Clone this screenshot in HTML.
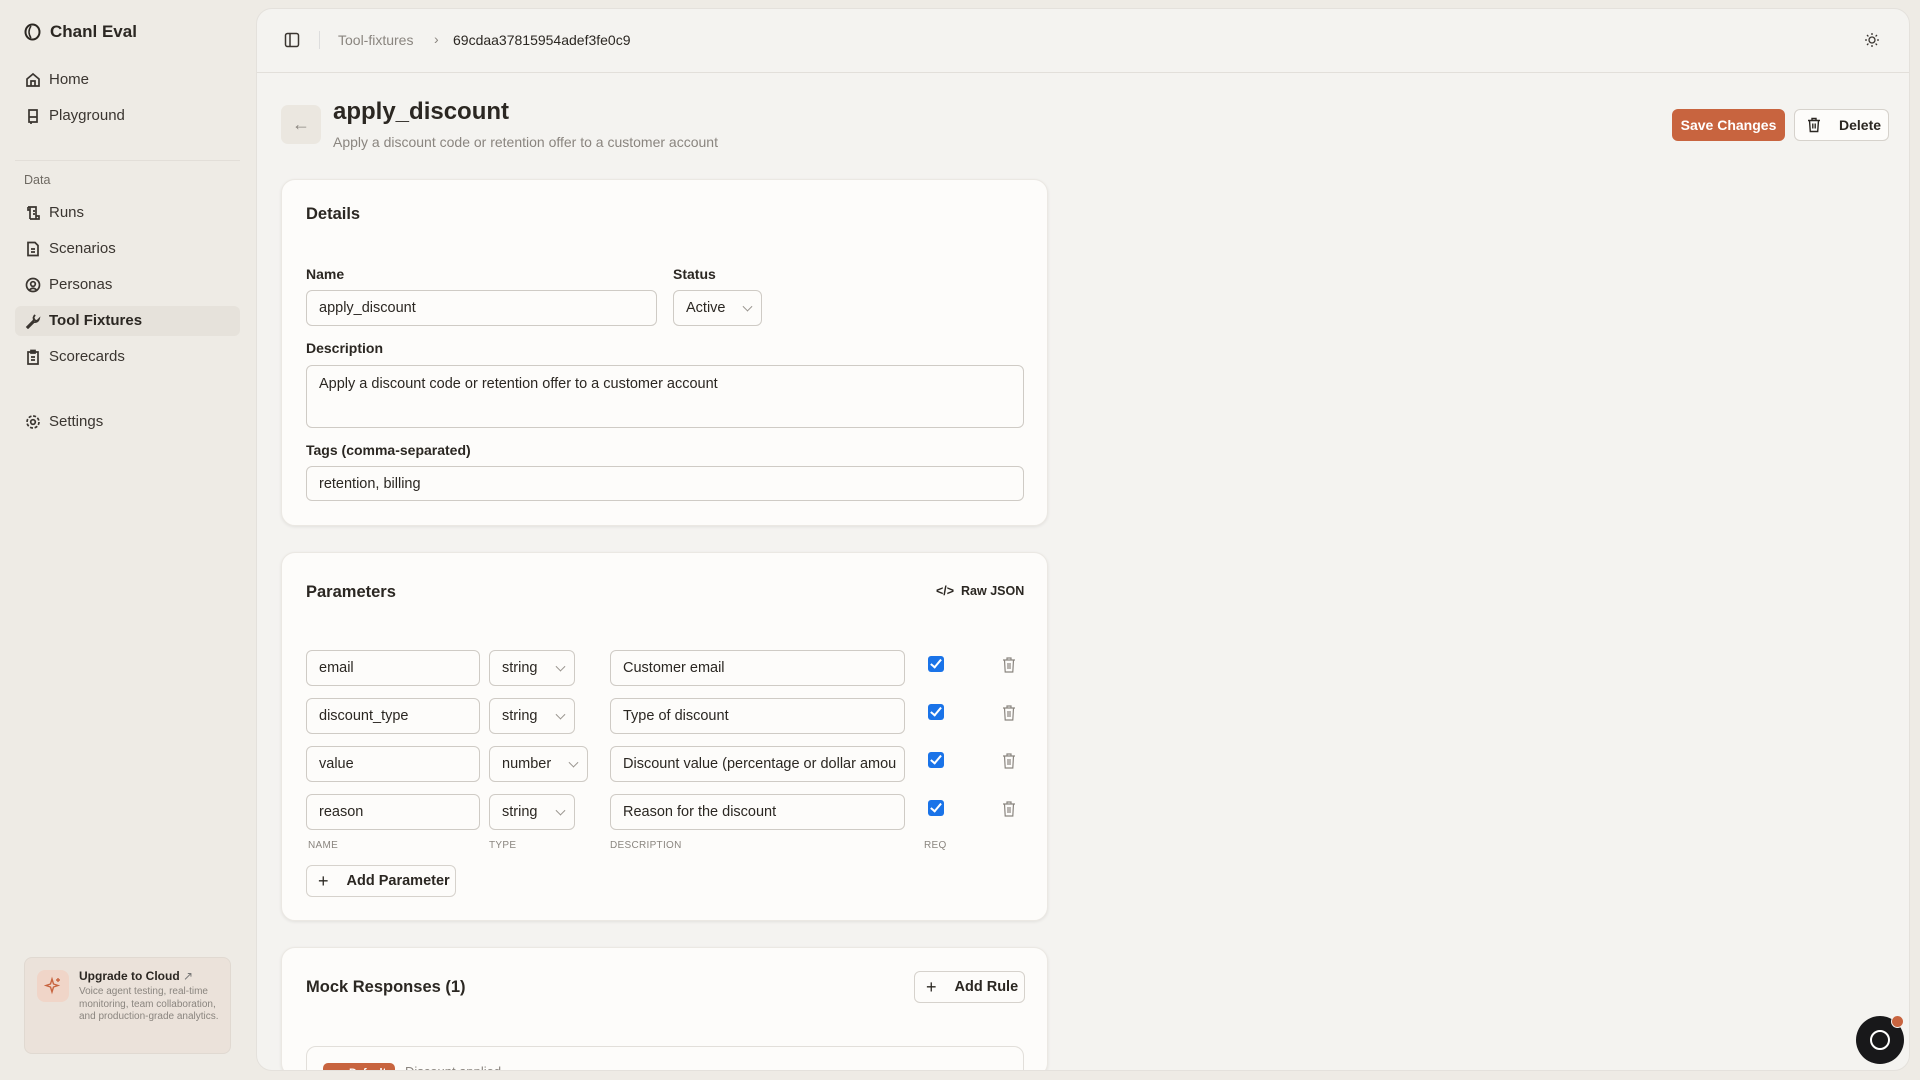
<!DOCTYPE html>
<html style="overflow:hidden"><head><meta charset="utf-8"><style>
*{box-sizing:border-box;margin:0;padding:0}
body{width:1920px;height:1080px;background:#eeebe5;font-family:"Liberation Sans",sans-serif;color:#2b2722;position:relative;overflow:hidden;font-size:15px}
.abs{position:absolute}
.nav{position:absolute;left:25px;display:flex;align-items:center;gap:8px;font-size:15px;color:#3a3530}
.nav svg{width:16px;height:16px;stroke:#3a3530;fill:none;stroke-width:1.7}
.main{position:absolute;left:256px;top:8px;width:1654px;height:1063px;background:#f4f3f0;border-radius:16px;border:1px solid #e4e1dc;overflow:hidden}
.card{position:absolute;background:#fdfcfa;border-radius:14px;box-shadow:0 1px 3px rgba(0,0,0,.08);border:1px solid #ebe8e3}
.inp{position:absolute;border:1px solid #cfcbc5;border-radius:6px;background:#fdfcfa;font-size:14.5px;padding-left:12px;display:flex;align-items:center;color:#2b2722;white-space:nowrap;overflow:hidden}
.lbl{position:absolute;font-size:14px;font-weight:bold;color:#2b2722}
.chev{position:absolute;right:10px;top:50%;width:7px;height:7px;border-right:1.3px solid #9a958f;border-bottom:1.3px solid #9a958f;transform:translateY(-70%) rotate(45deg)}
.cb{position:absolute;width:16px;height:16px;background:#1a73e8;border-radius:3px}
.cb:after{content:"";position:absolute;left:5px;top:1px;width:4px;height:9px;border-right:2px solid #fff;border-bottom:2px solid #fff;transform:rotate(40deg)}
.trash{position:absolute;width:16px;height:18px}
.col{position:absolute;font-size:10px;color:#8a857f;letter-spacing:.3px}
.btn{position:absolute;border:1px solid #d6d2cc;border-radius:6px;background:#fdfcfa;display:flex;align-items:center;font-size:14.5px;font-weight:bold;color:#2b2722}
</style></head><body>
<div class="abs" style="left:24px;top:22px;display:flex;align-items:center;gap:9px;font-weight:bold;font-size:17px">
<svg width="17" height="18" viewBox="0 0 17 18"><ellipse cx="8.5" cy="9" rx="7" ry="7.5" fill="none" stroke="#2b2722" stroke-width="2"/><path d="M7 3 Q3 9 7 15" fill="none" stroke="#2b2722" stroke-width="1.5"/></svg>Chanl Eval</div>
<div class="nav" style="top:71px"><svg viewBox="0 0 16 16"><path d="M2 7 L8 2 L14 7 V14 H2Z M6 14 V9 H10 V14"/></svg>Home</div>
<div class="nav" style="top:107px"><svg viewBox="0 0 16 16"><path d="M4 2 H12 V14 H4Z M4 9 H12 M6 14 V16"/></svg>Playground</div>
<div class="abs" style="left:15px;top:160px;width:225px;height:1px;background:#e2ded8"></div>
<div class="abs" style="left:24px;top:173px;font-size:12.5px;color:#6e6962">Data</div>
<div class="nav" style="top:204px"><svg viewBox="0 0 16 16"><path d="M3 2 H11 V14 H5 M3 2 V5 H5 M5 2 V14 M8 6 H10 M8 9 H10 M11 11 H14 V14 H11"/></svg>Runs</div>
<div class="nav" style="top:240px"><svg viewBox="0 0 16 16"><path d="M3 1.5 H10 L13 4.5 V14.5 H3Z M6 8 H10 M6 11 H10"/></svg>Scenarios</div>
<div class="nav" style="top:276px"><svg viewBox="0 0 16 16"><circle cx="8" cy="8" r="6.5"/><circle cx="8" cy="7" r="2.3"/><path d="M4.5 13 Q8 9.5 11.5 13"/></svg>Personas</div>
<div class="abs" style="left:15px;top:306px;width:225px;height:30px;background:#e6e2db;border-radius:6px"></div>
<div class="nav" style="top:312px;font-weight:bold;color:#2b2722"><svg viewBox="0 0 16 16"><path d="M10 2 A4 4 0 0 0 9 7 L2 14 L3 15 L9 9 A4 4 0 0 0 14 6 L12 8 L9.5 7 L8.5 4.5 Z"/></svg>Tool Fixtures</div>
<div class="nav" style="top:348px"><svg viewBox="0 0 16 16"><path d="M3 3 H13 V15 H3Z M6 1.5 H10 V4 H6Z M6 8 H10 M6 11 H10"/></svg>Scorecards</div>
<div class="nav" style="top:413px"><svg viewBox="0 0 16 16"><circle cx="8" cy="8" r="2.3"/><circle cx="8" cy="8" r="6" stroke-dasharray="3 1.7"/></svg>Settings</div>
<div class="abs" style="left:24px;top:957px;width:207px;height:97px;border:1px solid #e0d9d1;background:#ebe2da;border-radius:8px">
<div class="abs" style="left:12px;top:12px;width:32px;height:32px;background:#f0d5c8;border-radius:8px"><svg width="32" height="32" viewBox="0 0 32 32"><path d="M15 9 L16.5 14 L21 15.5 L16.5 17 L15 22 L13.5 17 L9 15.5 L13.5 14Z M21 8 V12 M19 10 H23" fill="none" stroke="#c8643f" stroke-width="1.4"/></svg></div>
<div class="abs" style="left:54px;top:11px;font-size:12px;font-weight:bold;color:#2b2722">Upgrade to Cloud <span style="font-weight:normal;color:#777">↗</span></div>
<div class="abs" style="left:54px;top:28px;width:148px;font-size:10px;line-height:12.7px;color:#8a857f">Voice agent testing, real-time monitoring, team collaboration, and production-grade analytics.</div>
</div>
<div class="main">
<div class="abs" style="left:0;top:63px;width:100%;height:1px;background:#e2dfda"></div>
<svg class="abs" style="left:27px;top:23px" width="16" height="16" viewBox="0 0 16 16"><rect x="1.5" y="1.5" width="13" height="13" rx="2" fill="none" stroke="#3a3530" stroke-width="1.5"/><path d="M6 1.5 V14.5" stroke="#3a3530" stroke-width="1.5"/></svg>
<div class="abs" style="left:62px;top:22px;width:1px;height:18px;background:#ddd"></div>
<div class="abs" style="left:81px;top:23px;font-size:14px;color:#8a857f">Tool-fixtures</div>
<div class="abs" style="left:177px;top:22px;font-size:14px;color:#8a857f">›</div>
<div class="abs" style="left:196px;top:23px;font-size:14px;color:#2b2722">69cdaa37815954adef3fe0c9</div>
<svg class="abs" style="left:1607px;top:23px" width="16" height="16" viewBox="0 0 16 16"><circle cx="8" cy="8" r="3" fill="none" stroke="#3a3530" stroke-width="1.3"/><path d="M8 1V3M8 13V15M1 8H3M13 8H15M3 3L4.4 4.4M11.6 11.6L13 13M3 13L4.4 11.6M11.6 4.4L13 3" stroke="#3a3530" stroke-width="1.3"/></svg>
<div class="abs" style="left:24px;top:96px;width:40px;height:39px;background:#ebe7e0;border-radius:7px;color:#8a857f;font-size:18px;text-align:center;line-height:38px">←</div>
<div class="abs" style="left:76px;top:89px;font-size:24px;font-weight:bold;color:#2b2722">apply_discount</div>
<div class="abs" style="left:76px;top:125px;font-size:14px;color:#8a857f">Apply a discount code or retention offer to a customer account</div>
<div class="abs" style="left:1415px;top:100px;width:113px;height:32px;background:#c8643f;border-radius:6px;color:#fff;font-size:14px;font-weight:bold;text-align:center;line-height:32px">Save Changes</div>
<div class="btn" style="left:1537px;top:100px;width:95px;height:32px;font-weight:bold;font-size:14px"><svg style="margin:0 18px 0 12px" width="14" height="16" viewBox="0 0 14 16"><path d="M1 3.5H13M5 3.5V1.5H9V3.5M2.5 3.5L3.3 14.5H10.7L11.5 3.5M5.8 6.5V11.5M8.2 6.5V11.5" fill="none" stroke="#2b2722" stroke-width="1.4"/></svg>Delete</div>

<div class="card" style="left:24px;top:170px;width:767px;height:347px">
<div class="abs" style="left:24px;top:25px;font-size:16.5px;font-weight:bold">Details</div>
<div class="lbl" style="left:24px;top:86px">Name</div>
<div class="inp" style="left:24px;top:110px;width:351px;height:36px">apply_discount</div>
<div class="lbl" style="left:391px;top:86px">Status</div>
<div class="inp" style="left:391px;top:110px;width:89px;height:36px">Active<span class="chev"></span></div>
<div class="lbl" style="left:24px;top:160px">Description</div>
<div class="inp" style="left:24px;top:185px;width:718px;height:63px;align-items:flex-start;padding-top:10px">Apply a discount code or retention offer to a customer account</div>
<div class="lbl" style="left:24px;top:262px">Tags (comma-separated)</div>
<div class="inp" style="left:24px;top:286px;width:718px;height:35px">retention, billing</div>
</div>

<div class="card" style="left:24px;top:543px;width:767px;height:369px">
<div class="abs" style="left:24px;top:30px;font-size:16.5px;font-weight:bold">Parameters</div>
<div class="abs" style="left:654px;top:31px;font-size:12.5px;font-weight:bold;color:#2b2722">&lt;/&gt;&nbsp; Raw JSON</div>
<div class="inp" style="left:24px;top:97px;width:174px;height:36px">email</div>
<div class="inp" style="left:207px;top:97px;width:86px;height:36px">string<span class="chev"></span></div>
<div class="inp" style="left:328px;top:97px;width:295px;height:36px">Customer email</div>
<div class="inp" style="left:24px;top:145px;width:174px;height:36px">discount_type</div>
<div class="inp" style="left:207px;top:145px;width:86px;height:36px">string<span class="chev"></span></div>
<div class="inp" style="left:328px;top:145px;width:295px;height:36px">Type of discount</div>
<div class="inp" style="left:24px;top:193px;width:174px;height:36px">value</div>
<div class="inp" style="left:207px;top:193px;width:99px;height:36px">number<span class="chev"></span></div>
<div class="inp" style="left:328px;top:193px;width:295px;height:36px">Discount value (percentage or dollar amou</div>
<div class="inp" style="left:24px;top:241px;width:174px;height:36px">reason</div>
<div class="inp" style="left:207px;top:241px;width:86px;height:36px">string<span class="chev"></span></div>
<div class="inp" style="left:328px;top:241px;width:295px;height:36px">Reason for the discount</div>
<div class="cb" style="left:646px;top:103px"></div><div class="cb" style="left:646px;top:151px"></div><div class="cb" style="left:646px;top:199px"></div><div class="cb" style="left:646px;top:247px"></div>
<svg class="trash" style="left:719px;top:103px" viewBox="0 0 16 18"><path d="M2 4H14M6 4V2H10V4M3.5 4L4.2 16H11.8L12.5 4M7 7V13M9 7V13" fill="none" stroke="#8a857f" stroke-width="1.2"/></svg>
<svg class="trash" style="left:719px;top:151px" viewBox="0 0 16 18"><path d="M2 4H14M6 4V2H10V4M3.5 4L4.2 16H11.8L12.5 4M7 7V13M9 7V13" fill="none" stroke="#8a857f" stroke-width="1.2"/></svg>
<svg class="trash" style="left:719px;top:199px" viewBox="0 0 16 18"><path d="M2 4H14M6 4V2H10V4M3.5 4L4.2 16H11.8L12.5 4M7 7V13M9 7V13" fill="none" stroke="#8a857f" stroke-width="1.2"/></svg>
<svg class="trash" style="left:719px;top:247px" viewBox="0 0 16 18"><path d="M2 4H14M6 4V2H10V4M3.5 4L4.2 16H11.8L12.5 4M7 7V13M9 7V13" fill="none" stroke="#8a857f" stroke-width="1.2"/></svg>
<div class="col" style="left:26px;top:287px">NAME</div><div class="col" style="left:207px;top:287px">TYPE</div><div class="col" style="left:328px;top:287px">DESCRIPTION</div><div class="col" style="left:642px;top:287px">REQ</div>
<div class="btn" style="left:24px;top:312px;width:150px;height:32px"><span style="margin:0 18px 0 11px;font-size:18px;font-weight:normal">+</span>Add Parameter</div>
</div>

<div class="card" style="left:24px;top:938px;width:767px;height:130px">
<div class="abs" style="left:24px;top:30px;font-size:16.5px;font-weight:bold">Mock Responses (1)</div>
<div class="btn" style="left:632px;top:23px;width:111px;height:32px"><span style="margin:0 18px 0 11px;font-size:18px;font-weight:normal">+</span>Add Rule</div>
<div class="abs" style="left:24px;top:98px;width:718px;height:80px;border:1px solid #e2dfda;border-radius:10px">
<div class="abs" style="left:16px;top:16px;width:72px;height:20px;background:#c8643f;border-radius:5px;color:#fff;font-size:11px;font-weight:bold;padding-left:26px;line-height:20px">Default</div>
<div class="abs" style="left:98px;top:17px;font-size:13px;color:#8a857f">Discount applied</div>
</div>
</div>
</div>
<div class="abs" style="left:1856px;top:1016px;width:48px;height:48px;border-radius:50%;background:#18181a"><div class="abs" style="left:14px;top:14px;width:20px;height:20px;border:2.5px solid #fff;border-radius:50%"></div></div>
<div class="abs" style="left:1891px;top:1015px;width:13px;height:13px;border-radius:50%;background:#c8643f;border:1.5px solid #f4f3f0"></div>
</body></html>
